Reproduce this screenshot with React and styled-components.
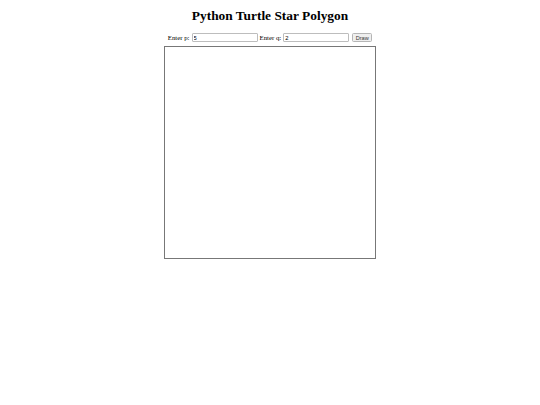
import styled, { createGlobalStyle } from "styled-components"

const GlobalStyle = createGlobalStyle`
    body {
        margin: 0;
        background: #ffffff;
        font-family: "Liberation Serif", "Times New Roman", serif;
    }
`

const App = () => {
    return (
        <Wrapper>
            <GlobalStyle />
            <Title>Python Turtle Star Polygon</Title>
            <Controls>
                <label>Enter p:</label>
                <Field type="number" defaultValue="5" />
                <label>Enter q:</label>
                <Field type="number" defaultValue="2" />
                <DrawButton>Draw</DrawButton>
            </Controls>
            <Canvas />
        </Wrapper>
    )
}

export default App

const Wrapper = styled.div`
    width: 100%;
    display: flex;
    flex-direction: column;
    align-items: center;
    padding-top: 8px;
`
const Title = styled.h1`
    font-size: 13.4px;
    font-weight: bold;
    line-height: 15px;
    margin: 0 0 10px 0;
    color: #000;
`
const Controls = styled.div`
    display: flex;
    align-items: center;
    gap: 2px;
    height: 9px;
    font-size: 6.8px;
    color: #000;
    label {
        white-space: nowrap;
    }
`
const Field = styled.input`
    box-sizing: border-box;
    width: 66px;
    height: 8.5px;
    padding: 0 1px;
    margin: 0;
    font-family: "Liberation Sans", Arial, sans-serif;
    font-size: 5.8px;
    border: 1px solid #bdbdbd;
    border-radius: 1px;
    background: #fff;
    outline: none;
    appearance: textfield;
    -moz-appearance: textfield;
    &::-webkit-inner-spin-button,
    &::-webkit-outer-spin-button {
        -webkit-appearance: none;
        margin: 0;
    }
`
const DrawButton = styled.button`
    box-sizing: border-box;
    width: 20px;
    height: 8.5px;
    padding: 0;
    margin-left: 1px;
    font-family: "Liberation Sans", Arial, sans-serif;
    font-size: 5.6px;
    color: #333;
    background: #efefef;
    border: 1px solid #b5b5b5;
    border-radius: 1.5px;
`
const Canvas = styled.div`
    box-sizing: border-box;
    width: 212px;
    height: 213px;
    margin-top: 4px;
    border: 1px solid #777;
    background: #fff;
`
